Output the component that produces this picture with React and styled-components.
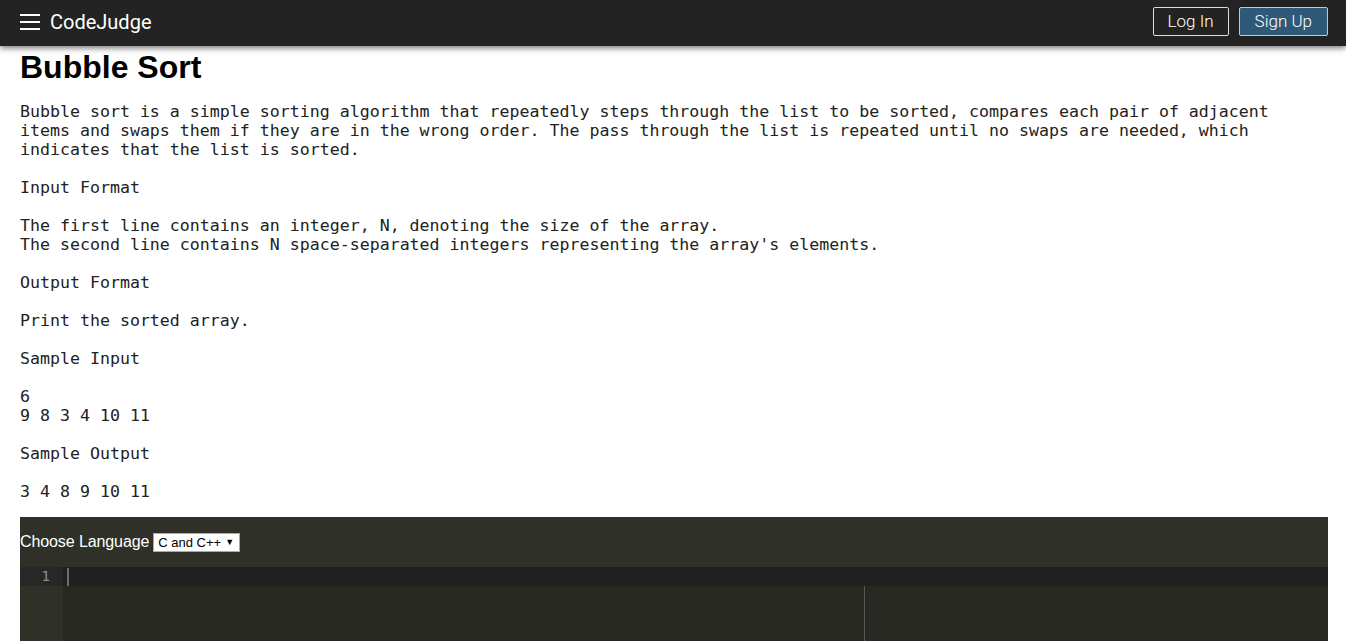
import React from 'react'
import styled, { createGlobalStyle } from 'styled-components'

const GlobalStyle = createGlobalStyle`
  body {
    margin: 0;
    background: #fff;
    font-family: "Liberation Sans", Arial, sans-serif;
  }
`

const Navbar = styled.nav`
  height: 46px;
  background: #232323;
  box-shadow: 0 2px 6px rgba(0, 0, 0, 0.55);
  display: flex;
  align-items: center;
  justify-content: space-between;
  padding: 0 18px 0 20px;
  position: relative;
  z-index: 2;
`

const Brand = styled.div`
  display: flex;
  align-items: center;
  gap: 10px;
  color: #fff;
  font-family: Roboto, "Liberation Sans", sans-serif;
  font-size: 20px;
  margin-top: -2px;
`

const Burger = styled.div`
  width: 20px;
  display: flex;
  flex-direction: column;
  gap: 5px;
  span {
    display: block;
    height: 2px;
    background: #fff;
  }
`

const Actions = styled.div`
  display: flex;
  gap: 10px;
  margin-top: -4px;
`

const NavButton = styled.button`
  height: 29px;
  padding: 0 ${p => (p.primary ? '15px' : '14px')};
  border: 1px solid ${p => (p.primary ? '#c8c8c8' : '#dcdcdc')};
  border-radius: 2px;
  background: ${p => (p.primary ? '#2e5a78' : 'transparent')};
  color: #fff;
  font-family: Roboto, "Liberation Sans", sans-serif;
  font-weight: 300;
  font-size: 17px;
  cursor: pointer;
`

const Main = styled.main`
  padding: 0 18px 0 20px;
`

const Title = styled.h1`
  margin: 3px 0 0;
  font-family: "Liberation Sans", Arial, sans-serif;
  font-size: 32px;
  line-height: 37px;
  font-weight: bold;
  color: #000;
`

const Statement = styled.pre`
  margin: 16px 0 16px;
  font-family: "DejaVu Sans Mono", "Liberation Mono", monospace;
  font-size: 16.6px;
  line-height: 19px;
  color: #222;
  white-space: pre-wrap;
`

const EditorWrap = styled.section`
  background: #2f3129;
`

const Toolbar = styled.div`
  height: 50px;
  display: flex;
  align-items: center;
  gap: 4px;
  color: #fff;
  font-size: 16px;
  letter-spacing: -0.1px;
`

const LangSelect = styled.div`
  height: 19px;
  width: 87px;
  box-sizing: border-box;
  background: #fff;
  border: 1px solid #aaa;
  color: #000;
  font-size: 13px;
  letter-spacing: 0;
  display: flex;
  align-items: center;
  padding: 0 4px;
  gap: 4px;
  span { font-size: 9px; }
`

const Editor = styled.div`
  position: relative;
  height: 300px;
  display: grid;
  grid-template-columns: 43px 1fr;
  background: #272822;
`

const Gutter = styled.div`
  background: #2f3129;
`

const GutterLine = styled.div`
  height: 19px;
  background: ${p => (p.active ? '#272727' : 'transparent')};
  color: #8f908a;
  font-family: "DejaVu Sans Mono", monospace;
  font-size: 14px;
  line-height: 19px;
  text-align: right;
  padding-right: 13px;
`

const Content = styled.div``

const ActiveLine = styled.div`
  height: 19px;
  background: #202020;
  position: relative;
`

const Cursor = styled.div`
  position: absolute;
  left: 4px;
  top: 1px;
  width: 2px;
  height: 18px;
  background: #6b6b67;
`

const PrintMargin = styled.div`
  position: absolute;
  left: 844px;
  top: 19px;
  bottom: 0;
  width: 1px;
  background: #555651;
`

const statement = `Bubble sort is a simple sorting algorithm that repeatedly steps through the list to be sorted, compares each pair of adjacent items and swaps them if they are in the wrong order. The pass through the list is repeated until no swaps are needed, which indicates that the list is sorted.

Input Format

The first line contains an integer, N, denoting the size of the array.
The second line contains N space-separated integers representing the array's elements.

Output Format

Print the sorted array.

Sample Input

6
9 8 3 4 10 11

Sample Output

3 4 8 9 10 11`

const App = () => {
  return (
    <>
      <GlobalStyle />
      <Navbar>
        <Brand>
          <Burger><span /><span /><span /></Burger>
          CodeJudge
        </Brand>
        <Actions>
          <NavButton>Log In</NavButton>
          <NavButton primary>Sign Up</NavButton>
        </Actions>
      </Navbar>
      <Main>
        <Title>Bubble Sort</Title>
        <Statement>{statement}</Statement>
        <EditorWrap>
          <Toolbar>
            Choose Language
            <LangSelect>C and C++ <span>▼</span></LangSelect>
          </Toolbar>
          <Editor>
            <Gutter>
              <GutterLine active>1</GutterLine>
            </Gutter>
            <Content>
              <ActiveLine><Cursor /></ActiveLine>
            </Content>
            <PrintMargin />
          </Editor>
        </EditorWrap>
      </Main>
    </>
  )
}

export default App
